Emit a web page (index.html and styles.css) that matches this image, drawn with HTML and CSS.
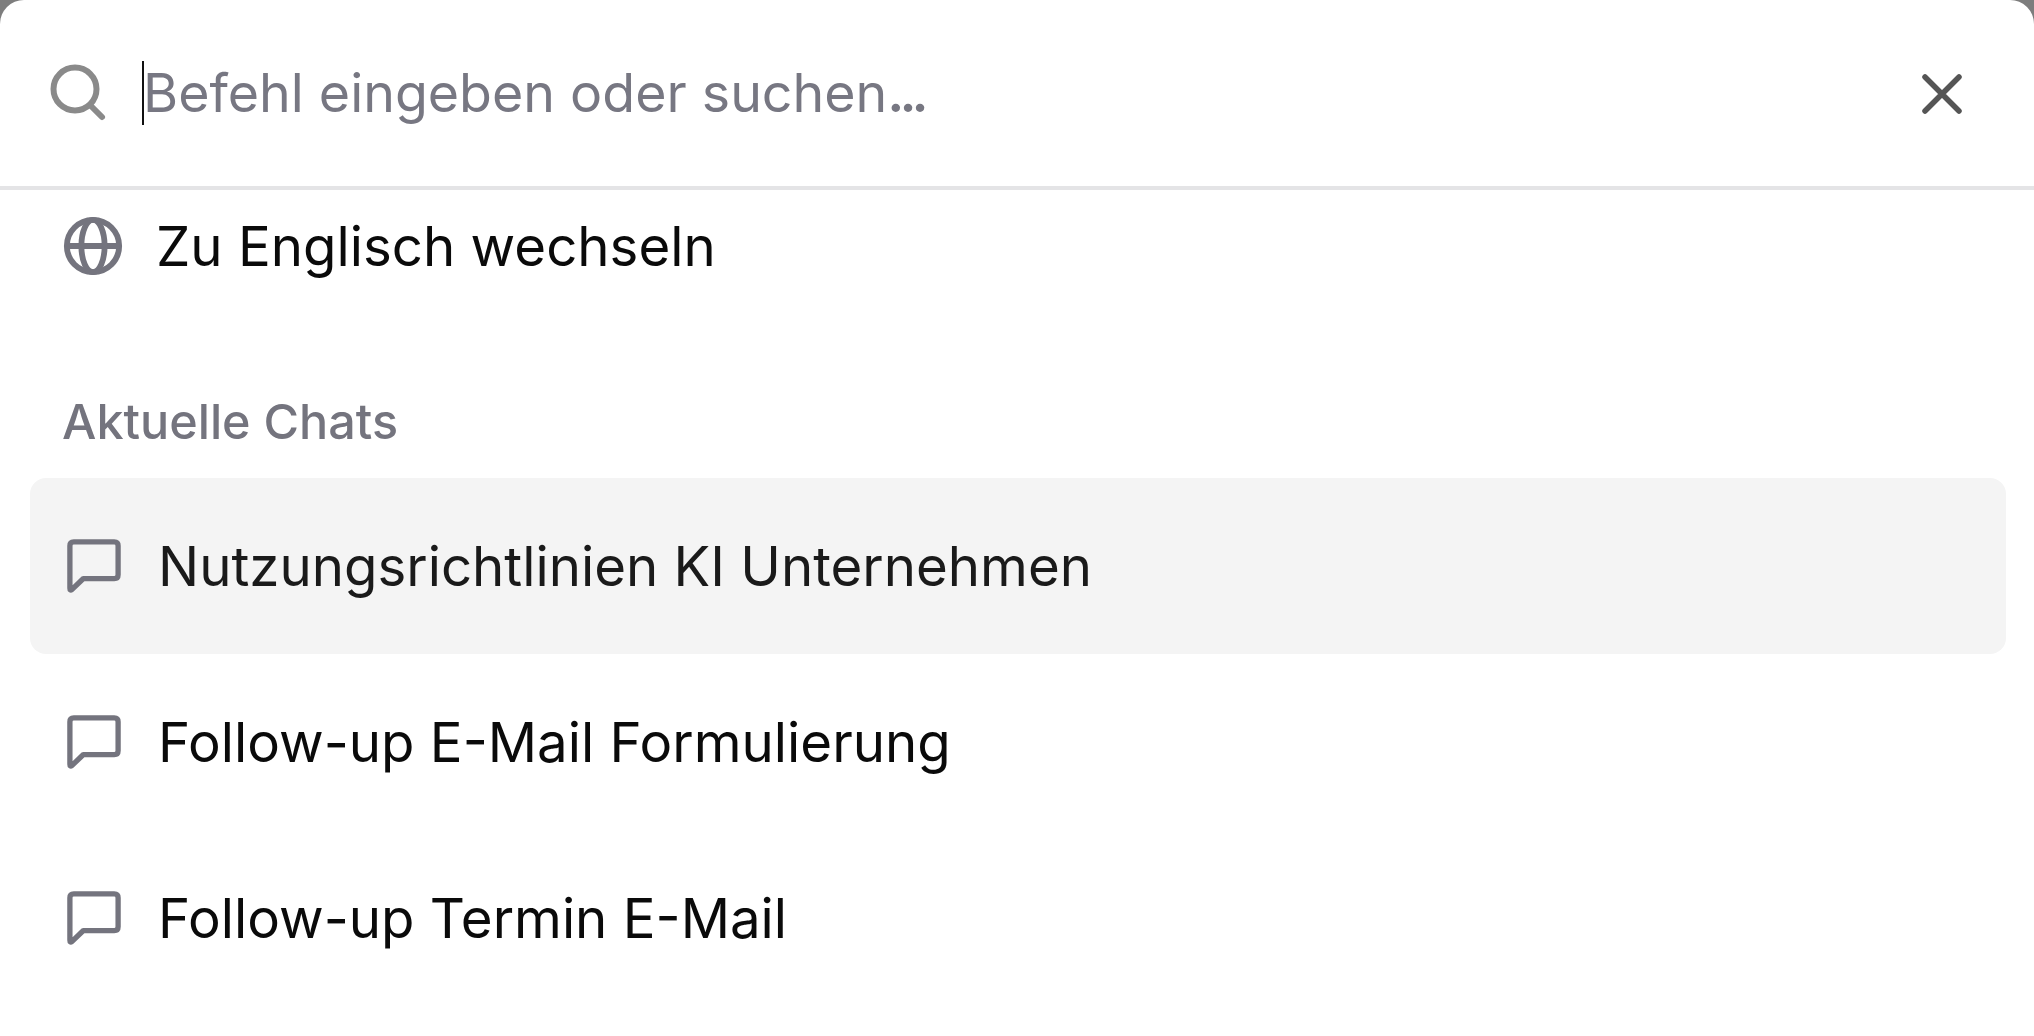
FILE: index.html
```html
<!DOCTYPE html>
<html lang="de">
<head>
<meta charset="utf-8">
<title>Befehlspalette</title>
<link rel="stylesheet" href="styles.css">
</head>
<body>
<div class="palette">
  <header class="search">
    <svg class="search-icon" viewBox="0 0 60 60" fill="none"><circle cx="27" cy="26" r="21.5"/><path d="M43 43 L54 54"/></svg>
    <div class="field"><span class="caret"></span><span class="placeholder">Befehl eingeben oder suchen<span class="dots">...</span></span></div>
    <svg class="close-icon" viewBox="0 0 44 44" fill="none"><path d="M5 5 L39 39 M39 5 L5 39"/></svg>
  </header>
  <main class="list">
    <div class="row row-first">
      <svg class="globe" viewBox="0 0 64 64" fill="none"><circle cx="32" cy="32" r="27"/><path d="M5 32 H59"/><ellipse cx="32" cy="32" rx="12" ry="27"/></svg>
      <span class="label">Zu Englisch wechseln</span>
    </div>
    <h2 class="heading">Aktuelle Chats</h2>
    <div class="row active">
      <svg class="chat" viewBox="0 0 56 56" fill="none"><path d="M3 7 Q3 3 7 3 H49 Q53 3 53 7 V37 Q53 41 49 41 H17 L5 52.500 Q3 54 3 51 Z"/></svg>
      <span class="label">Nutzungsrichtlinien KI Unternehmen</span>
    </div>
    <div class="row">
      <svg class="chat" viewBox="0 0 56 56" fill="none"><path d="M3 7 Q3 3 7 3 H49 Q53 3 53 7 V37 Q53 41 49 41 H17 L5 52.500 Q3 54 3 51 Z"/></svg>
      <span class="label">Follow-up E-Mail Formulierung</span>
    </div>
    <div class="row">
      <svg class="chat" viewBox="0 0 56 56" fill="none"><path d="M3 7 Q3 3 7 3 H49 Q53 3 53 7 V37 Q53 41 49 41 H17 L5 52.500 Q3 54 3 51 Z"/></svg>
      <span class="label">Follow-up Termin E-Mail</span>
    </div>
  </main>
</div>
</body>
</html>
```
FILE: styles.css
```css
* { box-sizing: border-box; }
html, body { margin: 0; height: 100%; }
body { background: #7d7d7d; overflow: hidden; font-family: Inter, "Noto Sans", sans-serif; }
.palette { height: 100%; background: #fff; border-radius: 24px 24px 0 0; display: flex; flex-direction: column; }
.search { height: 190px; flex: none; display: flex; align-items: center; padding: 0 70px 0 48px; border-bottom: 4px solid #e4e4e6; }
.search-icon { width: 60px; height: 60px; flex: none; stroke: #8a8a8a; stroke-width: 6; stroke-linecap: round; }
.field { flex: 1; display: flex; align-items: center; margin-left: 34px; }
.caret { width: 2px; height: 64px; background: #111; flex: none; }
.placeholder { font-size: 53.700px; line-height: 62px; color: #777782; margin: -1px 0 0 -1px; }
.dots { letter-spacing: -5px; font-weight: 600; }
.close-icon { width: 44px; height: 44px; flex: none; stroke: #555; stroke-width: 5.500; stroke-linecap: round; margin-top: 2px; }
.list { padding: 0 28px 0 30px; display: flex; flex-direction: column; }
.row { height: 176px; display: flex; align-items: center; padding-left: 37px; border-radius: 16px; }
.row-first { height: 112px; padding-left: 32px; }
.active { background: #f4f4f4; }
.globe { width: 62px; height: 62px; flex: none; stroke: #74747e; stroke-width: 6; }
.chat { width: 54px; height: 56px; flex: none; stroke: #74747e; stroke-width: 5.500; stroke-linejoin: round; }
.label { font-size: 54.600px; color: #0a0a0a; margin-left: 37px; white-space: nowrap; }
.active .label { color: #1a1a1a; }
.globe + .label { margin-left: 32px; }
.heading { margin: 0; height: 176px; display: flex; align-items: flex-end; padding: 0 0 27px 32px; font-size: 48.500px; font-weight: 500; color: #74747e; }
```
